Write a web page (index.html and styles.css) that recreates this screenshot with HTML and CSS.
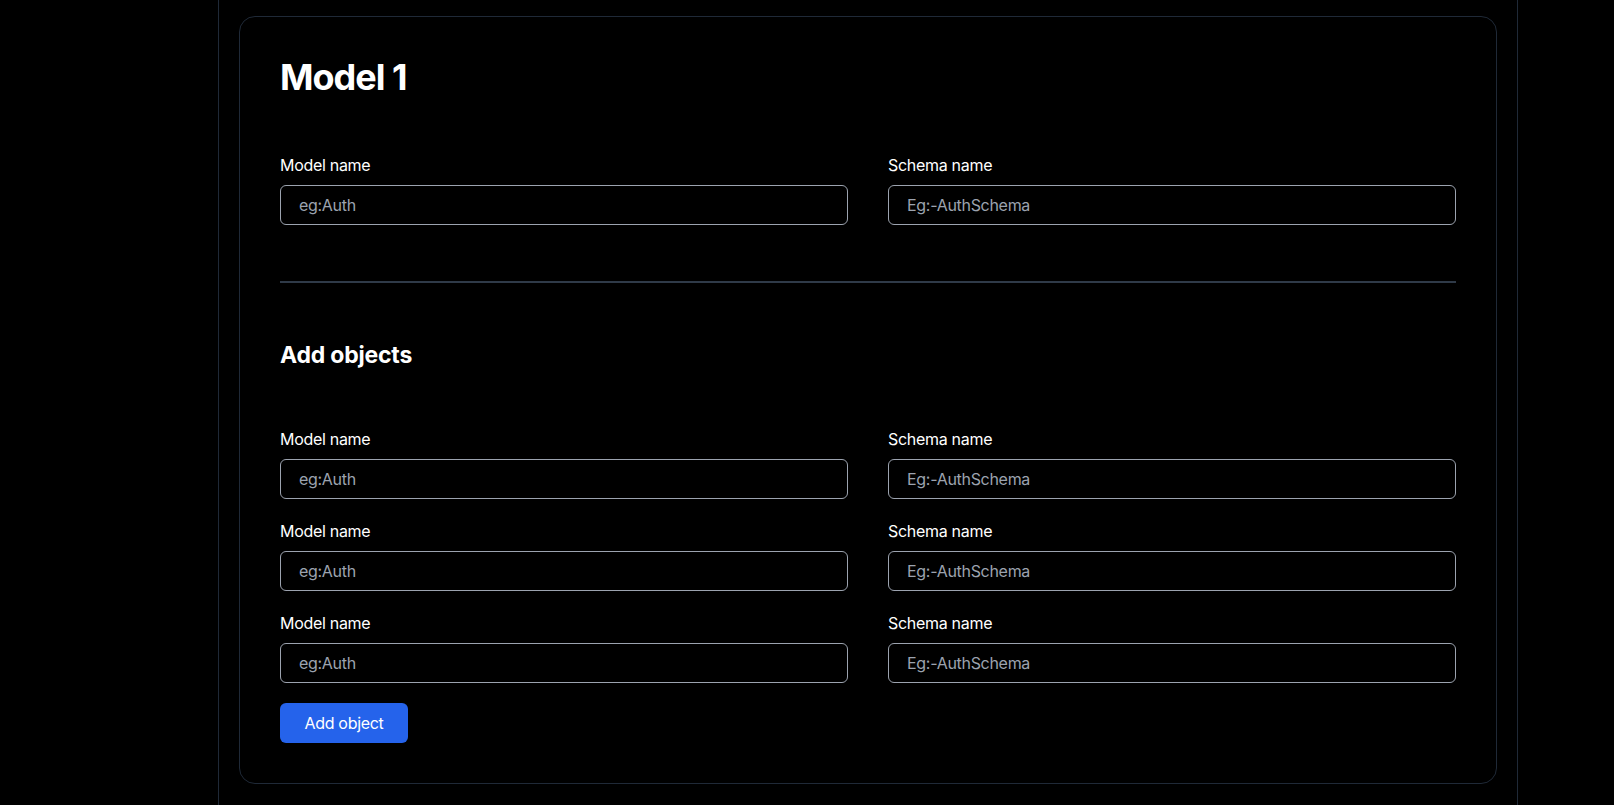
FILE: index.html
```html
<!DOCTYPE html>
<html lang="en">
<head>
  <meta charset="UTF-8">
  <meta name="viewport" content="width=device-width, initial-scale=1.0">
  <title>Models</title>
  <link rel="stylesheet" href="styles.css">
</head>
<body>
  <div class="page">
    <div class="frame">
      <div class="card">
        <h1 class="title">Model 1</h1>

        <div class="row">
          <div class="field">
            <label>Model name</label>
            <input type="text" placeholder="eg:Auth">
          </div>
          <div class="field">
            <label>Schema name</label>
            <input type="text" placeholder="Eg:-AuthSchema">
          </div>
        </div>

        <hr class="divider">

        <h2 class="subtitle">Add objects</h2>

        <div class="objects">
          <div class="row">
            <div class="field">
              <label>Model name</label>
              <input type="text" placeholder="eg:Auth">
            </div>
            <div class="field">
              <label>Schema name</label>
              <input type="text" placeholder="Eg:-AuthSchema">
            </div>
          </div>
          <div class="row">
            <div class="field">
              <label>Model name</label>
              <input type="text" placeholder="eg:Auth">
            </div>
            <div class="field">
              <label>Schema name</label>
              <input type="text" placeholder="Eg:-AuthSchema">
            </div>
          </div>
          <div class="row">
            <div class="field">
              <label>Model name</label>
              <input type="text" placeholder="eg:Auth">
            </div>
            <div class="field">
              <label>Schema name</label>
              <input type="text" placeholder="Eg:-AuthSchema">
            </div>
          </div>
          <div>
            <button class="add-btn">Add object</button>
          </div>
        </div>
      </div>
    </div>
  </div>
</body>
</html>
```

FILE: styles.css
```css
* {
  margin: 0;
  padding: 0;
  box-sizing: border-box;
}

body {
  background: #000;
  color: #fff;
  font-family: Inter, "Liberation Sans", sans-serif;
  font-size: 16px;
  line-height: 24px;
  letter-spacing: -0.3px;
}

.page {
  padding-left: 218px;
}

.frame {
  width: 1300px;
  min-height: 100vh;
  border-left: 1px solid #1f2937;
  border-right: 1px solid #1f2937;
  padding: 16px 20px;
}

.card {
  border: 1px solid #1f2937;
  border-radius: 16px;
  padding: 40px;
  display: flex;
  flex-direction: column;
  gap: 56px;
}

.title {
  font-size: 36px;
  line-height: 40px;
  font-weight: 700;
  letter-spacing: -1px;
}

.subtitle {
  font-size: 23px;
  line-height: 32px;
  font-weight: 700;
  letter-spacing: -0.2px;
}

.divider {
  border: none;
  border-top: 2px solid #2f3a48;
}

.row {
  display: grid;
  grid-template-columns: 1fr 1fr;
  gap: 40px;
}

.field label {
  display: block;
  margin-bottom: 8px;
}

.field input {
  display: block;
  width: 100%;
  height: 40px;
  background: transparent;
  border: 1px solid #9ca3af;
  border-radius: 6px;
  padding: 0 18px;
  color: #fff;
  font-family: inherit;
  font-size: 16px;
  letter-spacing: -0.3px;
}

.field input::placeholder {
  color: #9ca3af;
}

.objects {
  display: flex;
  flex-direction: column;
  gap: 20px;
}

.add-btn {
  height: 40px;
  width: 128px;
  background: #2563eb;
  color: #fff;
  border: none;
  border-radius: 6px;
  font-family: inherit;
  font-size: 16px;
  letter-spacing: -0.3px;
}
```
